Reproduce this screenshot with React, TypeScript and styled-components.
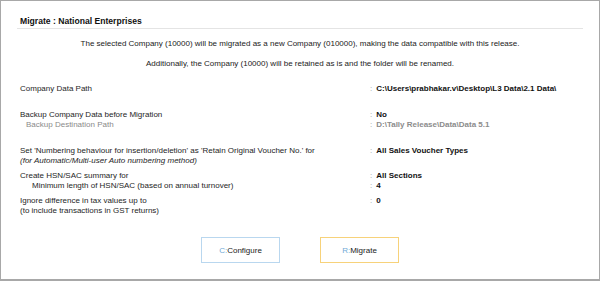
import React from "react";
import styled, { createGlobalStyle } from "styled-components";

const GlobalStyle = createGlobalStyle`
  html, body {
    margin: 0;
    padding: 0;
    background: #ffffff;
  }
  body {
    font-family: "Liberation Sans", Arial, sans-serif;
    color: #1a1a1a;
  }
`;

const Frame = styled.div`
  box-sizing: border-box;
  width: 600px;
  height: 281px;
  border: 1px solid #a8a8a8;
  border-bottom-width: 2px;
  background: #fff;
  padding: 0 16px;
  font-size: 8px;
  line-height: 10.5px;
`;

const Header = styled.div`
  padding: 15px 0 1px 3px;
  line-height: 11px;
  border-bottom: 1px solid #e4e4e4;
  font-weight: 700;
  font-size: 8.6px;
  color: #111;
`;

const Notice = styled.div`
  margin-top: 9.75px;
  display: flex;
  flex-direction: column;
  gap: 9.5px;
  text-align: center;
  color: #222;
`;

const Settings = styled.div`
  display: flex;
  flex-direction: column;
  padding-left: 3px;
`;

const Group = styled.div<{ gap: number }>`
  margin-top: ${(p) => p.gap}px;
`;

const Row = styled.div`
  display: grid;
  grid-template-columns: 348px 1fr;
`;

const Label = styled.div<{ indent?: number; muted?: boolean; italic?: boolean }>`
  padding-left: ${(p) => p.indent ?? 0}px;
  color: ${(p) => (p.muted ? "#8a8a8a" : "#1e1e1e")};
  font-style: ${(p) => (p.italic ? "italic" : "normal")};
`;

const Value = styled.div<{ muted?: boolean }>`
  display: flex;
  gap: 4px;
  font-weight: 700;
  color: ${(p) => (p.muted ? "#8c8c8c" : "#111")};
  &::before {
    content: ":";
    font-weight: 400;
    color: #9a9a9a;
    padding-left: 2px;
  }
`;

const Actions = styled.div`
  margin-top: 20.25px;
  display: flex;
  justify-content: center;
  gap: 40px;
`;

const ActionButton = styled.button<{ accent: string }>`
  box-sizing: border-box;
  width: 79px;
  height: 26px;
  background: #fff;
  border: 1px solid ${(p) => p.accent};
  font-family: "Liberation Sans", Arial, sans-serif;
  font-size: 8px;
  color: #1a1a1a;
  padding: 0;
  cursor: pointer;
`;

const Key = styled.span`
  color: #6fa9d6;
`;

type Line = {
  label: string;
  value?: string;
  indent?: number;
  muted?: boolean;
  italic?: boolean;
};

const groups: { gap: number; lines: Line[] }[] = [
  { gap: 14.5, lines: [{ label: "Company Data Path", value: "C:\\Users\\prabhakar.v\\Desktop\\L3 Data\\2.1 Data\\" }] },
  {
    gap: 15.5,
    lines: [
      { label: "Backup Company Data before Migration", value: "No" },
      { label: "Backup Destination Path", value: "D:\\Tally Release\\Data\\Data 5.1", indent: 6, muted: true },
    ],
  },
  {
    gap: 15,
    lines: [
      {
        label: "Set 'Numbering behaviour for insertion/deletion' as 'Retain Original Voucher No.' for",
        value: "All Sales Voucher Types",
      },
      { label: "(for Automatic/Multi-user Auto numbering method)", italic: true },
    ],
  },
  {
    gap: 4,
    lines: [
      { label: "Create HSN/SAC summary for", value: "All Sections" },
      { label: "Minimum length of HSN/SAC (based on annual turnover)", value: "4", indent: 12 },
    ],
  },
  {
    gap: 4,
    lines: [
      { label: "Ignore difference in tax values up to", value: "0" },
      { label: "(to include transactions in GST returns)" },
    ],
  },
];

export default function App() {
  return (
    <>
      <GlobalStyle />
      <Frame>
        <Header>Migrate : National Enterprises</Header>
        <Notice>
          <div>
            The selected Company (10000) will be migrated as a new Company (010000), making the data compatible with
            this release.
          </div>
          <div>Additionally, the Company (10000) will be retained as is and the folder will be renamed.</div>
        </Notice>
        <Settings>
          {groups.map((g, gi) => (
            <Group key={gi} gap={g.gap}>
              {g.lines.map((l, li) => (
                <Row key={li}>
                  <Label indent={l.indent} muted={l.muted} italic={l.italic}>
                    {l.label}
                  </Label>
                  {l.value !== undefined && <Value muted={l.muted}>{l.value}</Value>}
                </Row>
              ))}
            </Group>
          ))}
        </Settings>
        <Actions>
          <ActionButton accent="#b9d7ef">
            <Key>C:</Key>Configure
          </ActionButton>
          <ActionButton accent="#f7d27a">
            <Key>R:</Key>Migrate
          </ActionButton>
        </Actions>
      </Frame>
    </>
  );
}
